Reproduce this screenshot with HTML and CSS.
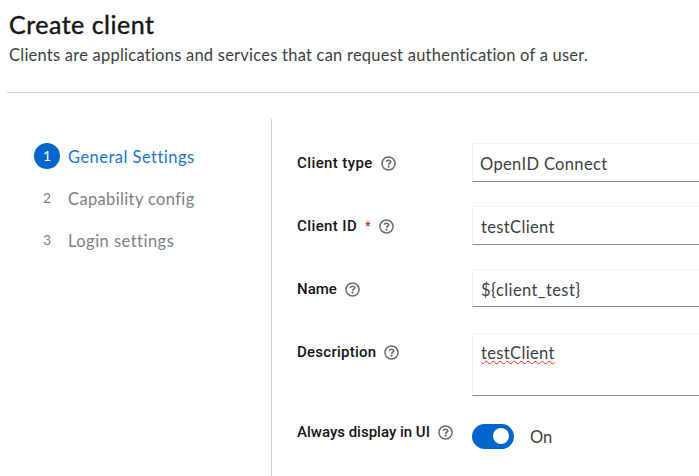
FILE: index.html
```
<!DOCTYPE html>
<html lang="en">
<head>
<meta charset="utf-8">
<title>Create client</title>
<link rel="stylesheet" href="styles.css">
</head>
<body>
<svg class="defs" width="0" height="0" aria-hidden="true">
  <symbol id="help" viewBox="0 0 16 16">
    <circle cx="8" cy="8" r="7" fill="none" stroke="currentColor" stroke-width="1.6"/>
    <path d="M5.600 6.200C5.900 5 6.800 4.500 8 4.500c1.400 0 2.300.7 2.300 1.800C10.300 7.700 8.100 7.700 8.100 9.300" fill="none" stroke="currentColor" stroke-width="1.800"/>
    <circle cx="8.100" cy="11.400" r="1.150" fill="currentColor"/>
  </symbol>
</svg>
<header class="header">
  <h1 class="title">Create client</h1>
  <p class="subtitle">Clients are applications and services that can request authentication of a user.</p>
</header>
<main class="wizard">
  <nav class="nav">
    <ol class="steps">
      <li class="step current"><span class="num">1</span><span class="step-name">General Settings</span></li>
      <li class="step capability"><span class="num">2</span><span class="step-name">Capability config</span></li>
      <li class="step"><span class="num">3</span><span class="step-name">Login settings</span></li>
    </ol>
  </nav>
  <form class="form">
    <div class="row">
      <div class="label wide"><span>Client type</span><svg class="help"><use href="#help"/></svg></div>
      <div class="input select"><span>OpenID Connect</span></div>
    </div>
    <div class="row">
      <div class="label wide"><span>Client ID</span><span class="required">*</span><svg class="help"><use href="#help"/></svg></div>
      <div class="input"><span>testClient</span></div>
    </div>
    <div class="row">
      <div class="label"><span>Name</span><svg class="help"><use href="#help"/></svg></div>
      <div class="input name"><span>${client_test}</span></div>
    </div>
    <div class="row tall">
      <div class="label medium"><span>Description</span><svg class="help"><use href="#help"/></svg></div>
      <div class="input area"><span class="misspelled">testClient</span></div>
    </div>
    <div class="row last">
      <div class="label"><span>Always display in UI</span><svg class="help"><use href="#help"/></svg></div>
      <div class="switch"><span class="toggle"><span class="knob"></span></span><span class="state">On</span></div>
    </div>
  </form>
</main>
</body>
</html>
```
FILE: styles.css
```
* { box-sizing: border-box; }
body {
  margin: 0;
  height: 476px;
  overflow: hidden;
  display: flex;
  flex-direction: column;
  background: #fff;
  color: #3c3f42;
  font-family: Lato, "Liberation Sans", sans-serif;
  font-size: 16.5px;
  line-height: 24px;
  white-space: nowrap;
}
.defs { position: absolute; }
.header {
  flex: none;
  height: 93px;
  margin-left: 7px;
  padding: 8px 0 0 2px;
  border-bottom: 1px solid #d2d2d2;
}
.title {
  margin: 0;
  color: #151515;
  font-size: 25px;
  font-weight: 400;
  line-height: 32px;
  -webkit-text-stroke: 0.4px #151515;
  letter-spacing: 0.5px;
}
.subtitle { margin: 3px 0 0; letter-spacing: 0.235px; }
.wizard { flex: 1; display: flex; margin-top: 26px; }
.nav { width: 272px; border-right: 1px solid #d2d2d2; padding: 24px 0 0 34px; }
.steps { margin: 0; padding: 0; list-style: none; display: grid; gap: 16px; }
.step { display: flex; align-items: center; gap: 8px; height: 26px; color: #7d7f82; letter-spacing: 0.47px; }
.step-name { padding-top: 2px; }
.capability { letter-spacing: 0.36px; }
.num { width: 26px; height: 26px; border-radius: 50%; font-size: 14px; line-height: 26px; text-align: center; letter-spacing: 0; }
.current { color: #1a75d6; }
.current .num { background: #06c; color: #fff; }
.form { flex: 1; padding: 24px 0 0 25px; }
.row { display: grid; grid-template-columns: 175px 1fr; height: 63px; }
.row.tall { height: 91px; }
.label {
  display: flex;
  align-items: center;
  height: 24px;
  margin-top: 8px;
  color: #151515;
  font-family: Roboto, "Liberation Sans", sans-serif;
  font-size: 15px;
  font-weight: 500;
}
.wide { letter-spacing: 0.4px; }
.medium { letter-spacing: 0.25px; }
.help { width: 15px; height: 15px; margin-left: 8px; color: #6a6e73; }
.required { color: #c9190b; margin-left: 8px; font-size: 12px; }
.input {
  height: 39px;
  padding: 8px 0 0 8px;
  border: 1px solid #f0f0f0;
  border-right: 0;
  border-bottom-color: #8a8d90;
  letter-spacing: 0.35px;
}
.select { padding-left: 7px; }
.name { height: 38px; letter-spacing: 0.43px; }
.area { height: 63px; margin-top: 1px; padding-top: 7px; }
.misspelled { text-decoration: underline wavy #e22 1px; text-underline-offset: 1px; text-decoration-skip-ink: none; }
.switch { display: flex; align-items: center; gap: 16px; height: 26px; }
.toggle { display: flex; justify-content: flex-end; align-items: center; width: 42px; height: 25px; padding-right: 5px; border-radius: 13px; background: #06c; }
.knob { width: 16px; height: 16px; border-radius: 50%; background: #fff; }
.state { padding-top: 2px; }
.last .label { margin-top: -3px; }
```
